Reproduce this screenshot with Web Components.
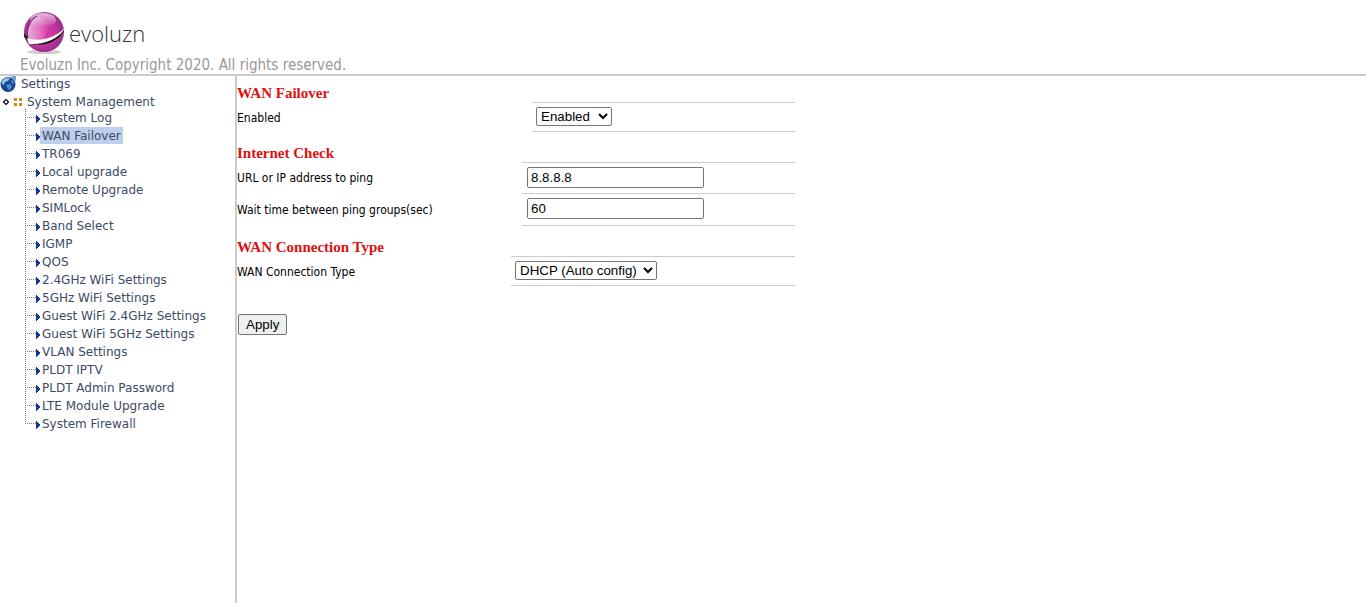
<!DOCTYPE html>
<html lang="en">
<head>
<meta charset="utf-8">
<title>WAN Failover</title>
<style>
  body {
    margin: 0;
    background: #fff;
    font-family: "DejaVu Sans Condensed", "Noto Sans", sans-serif;
  }
</style>
</head>
<body>
<router-app></router-app>

<script>
class AppHeader extends HTMLElement {
  constructor() {
    super();
    this.attachShadow({ mode: 'open' });
  }

  connectedCallback() {
    this.shadowRoot.innerHTML = `
      <style>
        :host {
          display: block;
        }

        header {
          padding: 11px 20px 0;
          border-bottom: 2px solid #ccc;
        }

        .logo {
          display: flex;
          align-items: center;
          height: 45px;
          font: 300 22px/45px "Open Sans", sans-serif;
          color: #333;
        }

        .logo svg {
          margin-right: 1px;
        }

        p {
          margin: 0;
          font-size: 15px;
          line-height: 18px;
          color: #999;
        }
      </style>
      <header>
        <div class="logo">
          <svg width="48" height="45" viewBox="0 0 48 45" aria-hidden="true">
            <defs>
              <radialGradient id="ball" cx="45%" cy="50%" r="58%">
                <stop offset="0" stop-color="#e23aac"/>
                <stop offset=".6" stop-color="#c2359d"/>
                <stop offset="1" stop-color="#8d2c86"/>
              </radialGradient>
              <linearGradient id="shine" x1="0" y1="0" x2="0" y2="1">
                <stop offset="0" stop-color="#fff" stop-opacity=".7"/>
                <stop offset="1" stop-color="#fff" stop-opacity="0"/>
              </linearGradient>
              <linearGradient id="glass" x1="0" y1="0" x2="1" y2="0">
                <stop offset="0" stop-color="#fff" stop-opacity=".6"/>
                <stop offset="1" stop-color="#fff" stop-opacity="0"/>
              </linearGradient>
            </defs>
            <ellipse cx="24" cy="41" rx="17" ry="2" fill="#ccc"/>
            <circle cx="24" cy="21" r="20" fill="url(#ball)"/>
            <ellipse cx="23" cy="9" rx="13" ry="7" fill="url(#shine)"/>
            <path d="M19 5C9 10 6 20 9 31l15-3 6-15z" fill="url(#glass)"/>
            <path d="M17 5C8 10 6 18 8 27" fill="none" stroke="#6b246b"/>
            <path d="M4 22l3 3 2 6-5-5z" fill="#222"/>
            <path d="M7 27C18 31 33 28 44 18l1 2C38 30 24 36 9 33z" fill="#fff"/>
            <path d="M44 19C37 28 24 34 10 33c14 3 27-2 34-12z" fill="#1c101c"/>
          </svg>
          <span>evoluzn</span>
        </div>
        <p>Evoluzn Inc. Copyright 2020. All rights reserved.</p>
      </header>
    `;
  }
}

class NavItem extends HTMLElement {
  constructor() {
    super();
    this.attachShadow({ mode: 'open' });
  }

  connectedCallback() {
    this.shadowRoot.innerHTML = `
      <style>
        :host {
          display: flex;
          height: 18px;
        }

        svg {
          flex: none;
        }

        a {
          box-sizing: border-box;
          height: 17px;
          padding: 1px 2px 0;
          color: #3c4a66;
          text-decoration: none;
          line-height: 16px;
          white-space: nowrap;
        }

        :host([selected]) a {
          background: #bccfec;
        }

        :host(:last-child) .rest {
          display: none;
        }
      </style>
      <svg width="15" height="18" viewBox="0 0 15 18" shape-rendering="crispEdges" aria-hidden="true">
        <path d="M.5 0v9" stroke="#777" stroke-dasharray="1 1"/>
        <path class="rest" d="M.5 10v8" stroke="#777" stroke-dasharray="1 1"/>
        <path d="M0 8.500h11" stroke="#777" stroke-dasharray="1 1"/>
        <path d="M11 6h1v1h1v1h1v1h1v2h-1v1h-1v1h-1v1h-1z" fill="#0b3a9c"/>
      </svg>
      <a href="#"><slot></slot></a>
    `;
  }
}

class SideNav extends HTMLElement {
  constructor() {
    super();
    this.attachShadow({ mode: 'open' });
  }

  connectedCallback() {
    this.shadowRoot.innerHTML = `
      <style>
        :host {
          display: block;
          border-right: 2px solid #ccc;
          font-family: "DejaVu Sans", sans-serif;
          font-size: 12px;
        }

        .row {
          display: flex;
          align-items: center;
          box-sizing: border-box;
          color: #3c4a66;
          text-decoration: none;
          height: 16px;
          line-height: 16px;
        }

        .root {
          gap: 5px;
        }

        .group {
          height: 17px;
          padding: 2px 0 0 2px;
          gap: 4px;
        }

        .group span {
          padding-left: 1px;
        }

        .items {
          padding-left: 25px;
        }
      </style>
      <nav>
        <a class="row root" href="#">
          <svg width="16" height="16" viewBox="0 0 16 16" aria-hidden="true">
            <circle cx="8" cy="8.500" r="7.500" fill="#17478f"/>
            <path d="M2 5c2-3 5-4 8-3L8 5 5 6 4 9 2 8z" fill="#8fc4e8"/>
            <path d="M6 9l4-1 2 2-2 4-2-1z" fill="#4c8fd0"/>
            <path d="M11 4l2 1 1 3-2-1z" fill="#5fa3dc"/>
            <path d="M11 0h5v5l-2-1-2-2z" fill="#6aa7c9"/>
          </svg>
          <span>Settings</span>
        </a>
        <a class="row group" href="#">
          <svg width="8" height="8" viewBox="0 0 8 8" shape-rendering="crispEdges" aria-hidden="true">
            <path d="M3 1h2v1h1v1h1v2H6v1H5v1H3V6H2V5H1V3h1V2h1z" fill="#333"/>
            <path d="M3 3h2v2H3z" fill="#fff"/>
          </svg>
          <svg width="8" height="8" viewBox="0 0 8 8" aria-hidden="true">
            <path d="M0 0h3v3H0zM5 0h3v3H5zM0 5h3v3H0zM5 5h3v3H5z" fill="#d08a1c"/>
          </svg>
          <span>System Management</span>
        </a>
        <div class="items"><slot></slot></div>
      </nav>
    `;
  }
}

class SettingsSection extends HTMLElement {
  constructor() {
    super();
    this.attachShadow({ mode: 'open' });
  }

  connectedCallback() {
    this.shadowRoot.innerHTML = `
      <style>
        :host {
          display: block;
          max-width: 558px;
          margin-bottom: 12px;
        }

        h2 {
          margin: 0;
          font: bold 15px/18px "Liberation Serif", serif;
          color: #e00f0f;
        }
      </style>
      <section>
        <h2>${this.getAttribute('heading')}</h2>
        <slot></slot>
      </section>
    `;
  }
}

class SettingRow extends HTMLElement {
  constructor() {
    super();
    this.attachShadow({ mode: 'open' });
  }

  connectedCallback() {
    const value = this.getAttribute('value');
    const options = (this.getAttribute('options') || '').split('|');
    const control = this.hasAttribute('options')
      ? `<select id="control">${options.map((o) => `<option>${o}</option>`).join('')}</select>`
      : `<input id="control" type="text" value="${value}">`;

    this.shadowRoot.innerHTML = `
      <style>
        :host {
          display: grid;
          grid-template-columns: var(--label-width, 285px) 1fr;
          font-size: 12px;
        }

        label {
          align-self: center;
          padding-top: 1px;
          line-height: 16px;
        }

        .field {
          display: flex;
          align-items: center;
          height: 28px;
          padding: 0 0 2px 4px;
          border-top: 1px solid #ccc;
        }

        :host(:last-child) .field {
          height: 26px;
          border-bottom: 1px solid #ccc;
        }

        :host([tall]) .field {
          height: 29px;
        }

        select,
        input {
          box-sizing: border-box;
          border: 1px solid #767676;
          border-radius: 2px;
          background: #fff;
          color: #000;
          font-family: "Liberation Sans", sans-serif;
        }

        select {
          height: 19px;
          padding: 0 2px 0 0;
        }

        input {
          width: 177px;
          height: 21px;
          margin-left: 1px;
          padding: 1px 3px;
        }
      </style>
      <label for="control">${this.getAttribute('label')}</label>
      <div class="field">${control}</div>
    `;
  }
}

class RouterApp extends HTMLElement {
  constructor() {
    super();
    this.attachShadow({ mode: 'open' });
  }

  connectedCallback() {
    this.shadowRoot.innerHTML = `
      <style>
        :host {
          display: grid;
          grid-template: auto 1fr / 237px 1fr;
          min-height: 100vh;
        }

        app-header {
          grid-column: 1 / -1;
        }

        main {
          padding-top: 8px;
        }

        .failover {
          --label-width: 295px;
        }

        .check {
          --label-width: 285px;
        }

        .type {
          --label-width: 274px;
        }

        button {
          height: 21px;
          margin: 16px 0 0 1px;
          padding: 0 7px;
          border: 1px solid #767676;
          border-radius: 2px;
          background: #efefef;
          color: #000;
          font-family: "Liberation Sans", sans-serif;
        }
      </style>
      <app-header></app-header>
      <side-nav>
        <nav-item>System Log</nav-item>
        <nav-item selected>WAN Failover</nav-item>
        <nav-item>TR069</nav-item>
        <nav-item>Local upgrade</nav-item>
        <nav-item>Remote Upgrade</nav-item>
        <nav-item>SIMLock</nav-item>
        <nav-item>Band Select</nav-item>
        <nav-item>IGMP</nav-item>
        <nav-item>QOS</nav-item>
        <nav-item>2.4GHz WiFi Settings</nav-item>
        <nav-item>5GHz WiFi Settings</nav-item>
        <nav-item>Guest WiFi 2.4GHz Settings</nav-item>
        <nav-item>Guest WiFi 5GHz Settings</nav-item>
        <nav-item>VLAN Settings</nav-item>
        <nav-item>PLDT IPTV</nav-item>
        <nav-item>PLDT Admin Password</nav-item>
        <nav-item>LTE Module Upgrade</nav-item>
        <nav-item>System Firewall</nav-item>
      </side-nav>
      <main>
        <settings-section class="failover" heading="WAN Failover">
          <setting-row label="Enabled" options="Enabled|Disabled"></setting-row>
        </settings-section>
        <settings-section class="check" heading="Internet Check">
          <setting-row label="URL or IP address to ping" value="8.8.8.8"></setting-row>
          <setting-row tall label="Wait time between ping groups(sec)" value="60"></setting-row>
        </settings-section>
        <settings-section class="type" heading="WAN Connection Type">
          <setting-row label="WAN Connection Type" options="DHCP (Auto config)"></setting-row>
        </settings-section>
        <button type="button">Apply</button>
      </main>
    `;
  }
}

customElements.define('app-header', AppHeader);
customElements.define('nav-item', NavItem);
customElements.define('side-nav', SideNav);
customElements.define('setting-row', SettingRow);
customElements.define('settings-section', SettingsSection);
customElements.define('router-app', RouterApp);
</script>
</body>
</html>
